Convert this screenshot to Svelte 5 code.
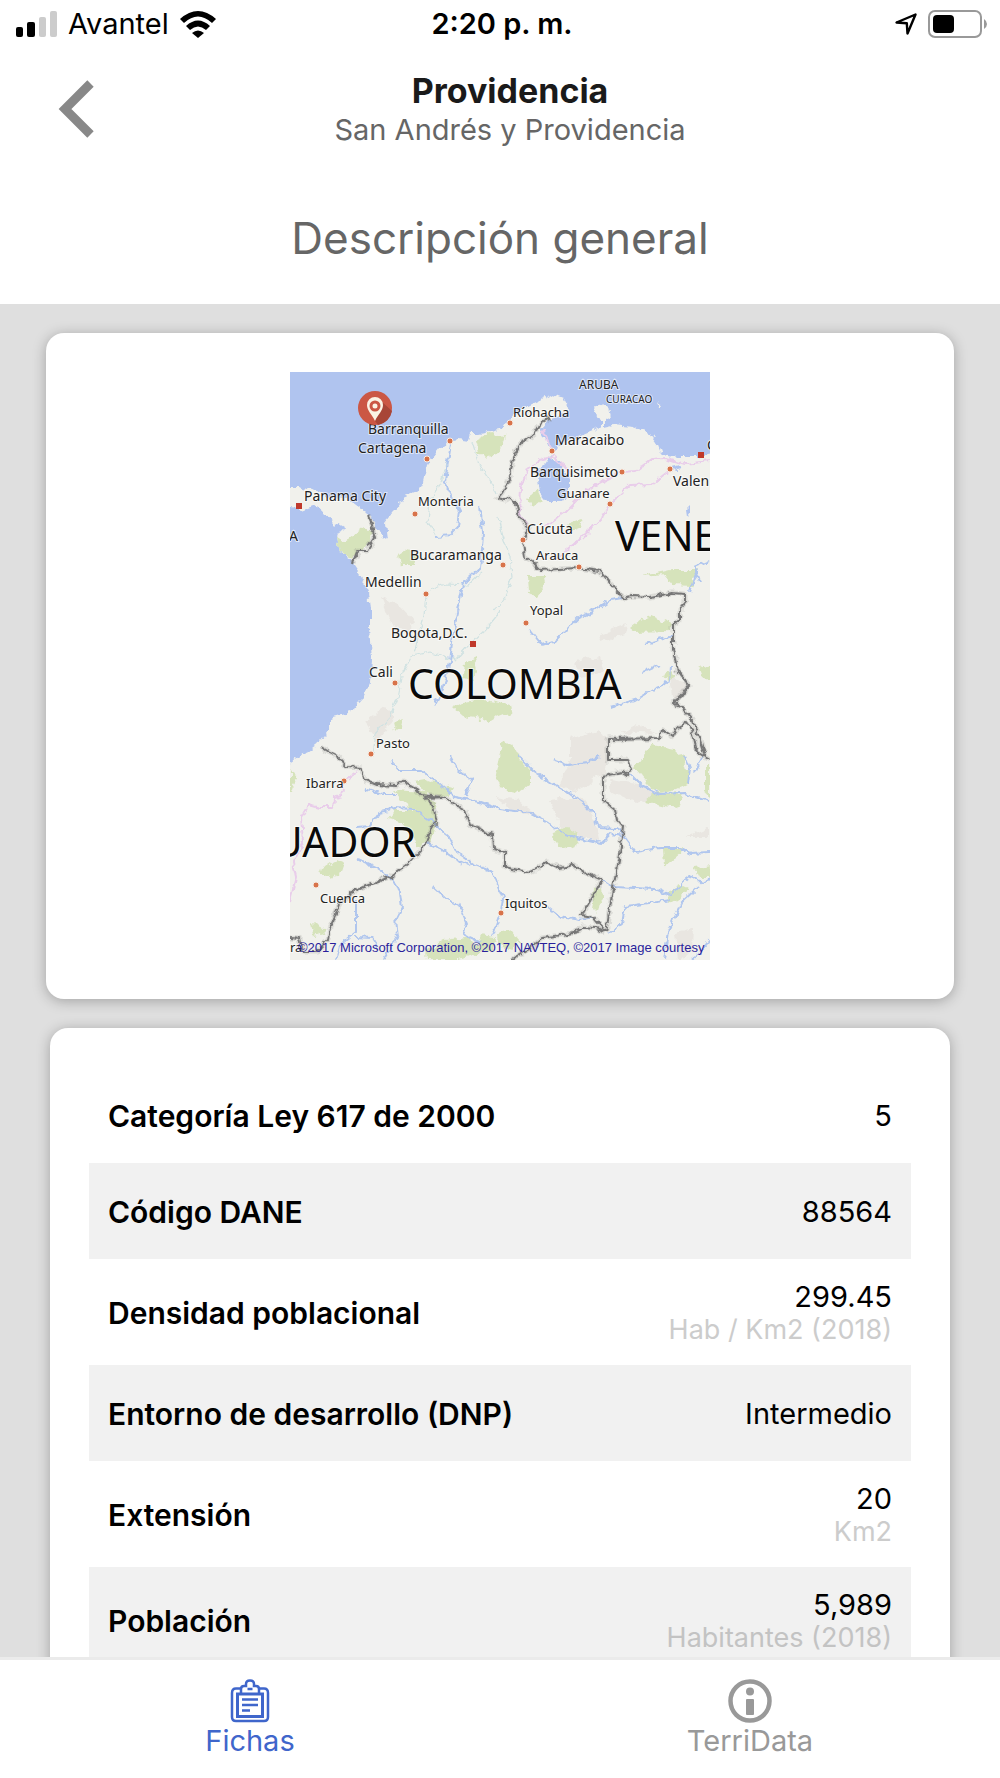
<script lang="ts">
  type Row = { label: string; value: string; unit?: string };
  type Place = { name: string; x: number; y: number; size?: number };

  const rows: Row[] = [
    { label: "Categoría Ley 617 de 2000", value: "5" },
    { label: "Código DANE", value: "88564" },
    { label: "Densidad poblacional", value: "299.45", unit: "Hab / Km2 (2018)" },
    { label: "Entorno de desarrollo (DNP)", value: "Intermedio" },
    { label: "Extensión", value: "20", unit: "Km2" },
    { label: "Población", value: "5,989", unit: "Habitantes (2018)" },
  ];

  const places: Place[] = [
    { name: "ARUBA", x: 289, y: 17, size: 12 },
    { name: "CURACAO", x: 316, y: 31, size: 10 },
    { name: "Ríohacha", x: 223, y: 45, size: 13 },
    { name: "Maracaibo", x: 265, y: 73 },
    { name: "Barquisimeto", x: 240, y: 105 },
    { name: "Guanare", x: 267, y: 126, size: 13 },
    { name: "Valen", x: 383, y: 114 },
    { name: "C", x: 417, y: 78 },
    { name: "Cúcuta", x: 237, y: 162 },
    { name: "Arauca", x: 246, y: 188, size: 13 },
    { name: "Barranquilla", x: 78, y: 62 },
    { name: "Cartagena", x: 68, y: 81 },
    { name: "Panama City", x: 14, y: 129 },
    { name: "Monteria", x: 128, y: 134, size: 13 },
    { name: "Bucaramanga", x: 120, y: 188 },
    { name: "Medellin", x: 75, y: 215 },
    { name: "Bogota,D.C.", x: 101, y: 266 },
    { name: "Cali", x: 79, y: 305 },
    { name: "Pasto", x: 86, y: 376, size: 13 },
    { name: "Yopal", x: 240, y: 243, size: 13 },
    { name: "Ibarra", x: 16, y: 416, size: 13 },
    { name: "Cuenca", x: 30, y: 531, size: 13 },
    { name: "Iquitos", x: 215, y: 536, size: 13 },
  ];

  const cities = [
    [160, 69], [137, 87], [125, 142], [220, 51], [262, 79], [332, 100], [320, 132],
    [380, 97], [233, 168], [213, 193], [289, 195], [136, 222], [105, 311], [81, 382],
    [236, 251], [54, 409], [26, 513], [211, 541],
  ];

  const capitals = [[9, 134], [183, 272], [411, 83]];

  const borders = [
    "M260 46L250 51L243 63L232 70L223 86L220 106L212 121L208 126L215 128L220 125L227 133L230 145L238 156L233 168L235 185L243 190L250 198L287 196L310 199L333 226L343 224L360 225L382 221L395 222L395 230L390 236L390 248L383 253L383 278L388 300L399 313L392 323L383 331L390 334L403 348L410 368L415 385L420 388",
    "M415 385L407 380L402 358L397 351L387 356L382 365L372 358L370 366L318 367L318 388L337 388L341 396L338 403L333 400L323 402L313 404L313 428L325 438L327 448L333 455L330 483L323 516L316 560",
    "M316 560L303 545L292 543L312 508L290 498L283 493L270 496L257 491L240 500L227 498L215 495L215 480L203 477L202 463L180 453L175 438L153 425L130 423L123 415L113 409L107 414L87 413L75 408L70 396L57 395L48 385L40 381L30 375",
    "M153 425L135 426L143 433L147 451L142 455L137 471L120 490L100 505L60 520L58 526L50 531L40 556L38 568L27 580L13 580L10 566L0 565",
    "M316 560L305 556L293 555L283 561L253 566L240 576L222 587",
    "M78 144L82 153L85 166L77 178L68 178L63 191",
  ];

  const rivers = [
    "M161 72L158 90L155 110L164 128L170 140L168 155L160 163L146 165",
    "M190 134L193 160L192 178L190 196L173 212L168 240L163 262L160 290L152 318L144 334",
    "M409 210L404 195L420 188M408 198L400 220",
    "M240 258L252 273L267 268L288 246L302 240L320 228L333 226",
    "M355 272L372 267L383 264M353 300L369 293",
    "M320 335L345 328L362 318L380 310L381 294",
    "M100 389L108 398L130 398L150 412L165 425L190 430L210 437L240 441L258 450L274 462L290 466L312 471L320 462L333 464L345 480L370 476L390 476L400 481L420 480",
    "M160 383L168 398L182 408L176 424",
    "M75 416L92 422L107 422M67 455L80 454L90 440L105 436L124 437L140 448L160 466L167 480L185 493L203 500L213 526L210 545L203 564",
    "M137 471L152 478L165 487L180 494",
    "M68 487L85 495L100 505L110 520L112 536L106 548L108 564L94 588",
    "M143 515L155 526L170 534L177 552L173 563L190 570M66 528L66 560L50 573L46 588M66 565L82 566L88 576",
    "M228 383L245 400L262 411L278 420L293 431L306 445L308 455L325 456L333 462",
    "M263 388L278 393L297 390L310 385",
    "M340 402L352 414L370 422L395 421L405 425L420 430",
    "M395 383L400 396L398 412M413 383L405 399",
    "M312 508L323 515L345 516L365 517L380 523L395 508L402 503L412 511L420 506",
    "M380 528L345 533L335 534L332 552L318 562",
    "M408 515L392 530L385 545L378 560L374 588M420 568L408 582L400 588",
    "M258 536L270 545L290 548L302 545",
  ];

  const streams = [
    "M182 70L188 90L200 108L206 122M158 90L150 112L140 128L138 150L146 165",
    "M210 240L195 258L180 272L165 288L140 280L122 284L113 300L108 325L100 345L85 362L82 382",
    "M140 218L155 212L178 213L192 200M136 222L134 245L124 280",
    "M208 145L213 165L220 185L222 205L215 225L205 238",
  ];

  const roads = [
    "M238 156L230 140L231 115L238 97L250 88L263 84L275 95L282 103M262 78L252 58",
    "M252 156L275 140L293 122L305 113L332 100L345 99L362 87L375 86L395 92L420 89",
    "M265 188L285 172L310 148L320 132L340 113L362 112L380 98",
    "M67 400L54 409L52 424L44 426L43 435L30 435L19 432L11 445L13 470L3 490L6 505L0 530",
  ];

  const parks = [
    "M185 68L200 60L216 65L210 80L196 85L188 80Z",
    "M47 165L55 170L75 155L82 160L80 172L68 180L62 188L50 180Z",
    "M237 204L254 204L255 214L246 225L238 220Z",
    "M350 204L372 200L380 198L407 198L403 214L383 213L375 203L350 205Z",
    "M340 256L350 248L362 244L381 252L380 259L345 260Z",
    "M420 291L409 297L412 305L420 309Z",
    "M163 335L172 330L195 327L222 333L223 340L205 347L197 352L185 345L172 343Z",
    "M213 369L222 373L230 388L240 398L240 412L229 420L210 416L205 402L208 390Z",
    "M345 396L352 385L362 373L385 377L395 385L398 400L398 412L385 418L372 422L362 416Z",
    "M355 429L363 422L393 421L388 437Z",
    "M124 409L135 407L152 413L165 417L160 424L145 425L133 420Z",
    "M104 419L135 421L145 432L147 450L140 470L127 475L123 462L110 450L98 447L105 438L125 438L112 428Z",
    "M263 460L277 455L288 462L286 474L277 478L264 470Z",
    "M28 500L40 492L50 487L55 489L50 503L40 506Z",
    "M373 475L392 476L391 482L374 495Z",
    "M405 496L420 494L420 506L410 506Z",
    "M380 519L390 513L400 518L388 527L381 531Z",
    "M135 580L155 568L175 565L188 572L190 564L205 566L200 578L170 588L136 588Z",
    "M207 562L220 558L230 570L218 578L208 573Z",
    "M304 518L311 516L313 530L306 541L302 537Z",
    "M108 183L118 176L127 186L124 192L110 192Z",
    "M103 351L113 345L111 354L105 360Z",
    "M236 126L248 118L252 127L243 135Z",
    "M277 152L292 146L290 156L280 160Z",
    "M22 550L33 556L34 562L25 565Z",
    "M0 396L6 405L2 418L0 418Z",
    "M373 303L380 300L385 305L378 309Z",
    "M175 290L185 285L188 300L182 310L174 305Z",
    "M415 394L420 394L420 424L415 420Z",
  ];

  const hills = [
    "M280 366L310 358L318 368L316 400L285 420L270 412L280 388Z",
    "M260 428L290 425L305 445L310 468L290 465L270 455Z",
    "M205 425L225 428L250 445L225 440Z",
    "M285 290L310 285L315 300L290 305Z",
    "M396 465L420 455L420 465Z",
    "M320 408L350 412L375 425L345 430L322 420Z",
    "M380 305L398 312L392 325L383 325Z",
    "M330 360L350 352L368 362Z",
    "M385 560L403 556L402 580L388 588Z",
    "M90 225L108 232L125 250L118 262L100 250Z",
    "M75 350L95 335L105 345L88 368Z",
    "M310 262L338 252L335 262L312 270Z",
  ];
</script>

<svelte:head>
  <title>Providencia</title>
</svelte:head>

<div class="app">
  <div class="status">
    <div class="status-left">
      <svg class="signal" viewBox="0 0 41 26" aria-hidden="true">
        <rect x="0" y="16" width="7" height="10" rx="2" />
        <rect x="11" y="11" width="8" height="15" rx="2" />
        <rect class="off" x="23" y="6" width="7" height="20" rx="2" />
        <rect class="off" x="34" y="0" width="7" height="26" rx="2" />
      </svg>
      <span>Avantel</span>
      <svg class="wifi" viewBox="0 0 36 27" aria-hidden="true">
        <path d="M0 8Q18-8 36 8L32 12Q18-1 4 12Z" />
        <path d="M6 15Q18 4 30 15L26 19Q18 12 10 19Z" />
        <path d="M12 22Q18 17 24 22L18 27Z" />
      </svg>
    </div>
    <span class="time">2:20 p. m.</span>
    <div class="status-right">
      <svg class="location" viewBox="0 0 22 22" aria-hidden="true">
        <path d="M1.5 9.5L20.5 1.5L12.5 20.5L11.8 10.2Z" />
      </svg>
      <svg class="battery" viewBox="0 0 60 28" aria-hidden="true">
        <rect class="shell" x="1" y="1" width="52" height="26" rx="6" />
        <rect x="5" y="5" width="21" height="18" rx="4" />
        <path class="nub" d="M56 9Q59 11 59 14Q59 17 56 19Z" />
      </svg>
    </div>
  </div>

  <header>
    <button class="back" aria-label="Volver">
      <svg viewBox="0 0 36 58" aria-hidden="true">
        <path d="M32.5 3.5L7 29L32.5 54.5" />
      </svg>
    </button>
    <div class="place">
      <strong>Providencia</strong>
      <span>San Andrés y Providencia</span>
    </div>
  </header>

  <h1>Descripción general</h1>

  <main>
    <section class="card map-card">
      <svg class="map" viewBox="0 0 420 588" role="img" aria-label="Mapa de Colombia">
        <defs>
          <filter id="rough" x="-5%" y="-5%" width="110%" height="110%">
            <feTurbulence type="fractalNoise" baseFrequency="0.12" numOctaves="3" seed="4" />
            <feDisplacementMap in="SourceGraphic" scale="9" xChannelSelector="R" yChannelSelector="G" />
          </filter>
          <filter id="rough-line" x="-5%" y="-5%" width="110%" height="110%">
            <feTurbulence type="fractalNoise" baseFrequency="0.15" numOctaves="2" seed="9" />
            <feDisplacementMap in="SourceGraphic" scale="7" xChannelSelector="R" yChannelSelector="G" />
          </filter>
        </defs>
        <rect class="sea" width="420" height="588" />
        <g filter="url(#rough)">
          <path
            class="land"
            d="M-9 115L10 115L27 120L40 125L57 126L70 136L80 143L87 156L93 168L98 166L96 150L107 136L113 126L127 120L133 110L137 93L142 86L150 76L158 70L167 68L180 70L182 61L190 61L213 56L223 43L240 33L257 25L263 22L273 26L278 35L272 43L257 48L250 56L257 70L262 80L273 71L293 63L310 56L323 53L343 55L360 61L367 70L372 83L387 85L407 85L430 80L430 600L-9 600L-9 396L0 391L10 385L30 370L40 358L40 346L62 340L72 328L80 311L82 288L80 255L80 238L78 218L72 205L62 190L50 180L47 165L53 156L45 151L33 140L23 133L10 138L-9 136Z"
          />
          <path class="land" d="M305 38L312 30L318 36L320 46L315 48L315 56L312 56L312 48L306 45Z" />
          <path class="land" d="M367 30L371 36L369 38Z" />
          <path class="sea" d="M263 82L255 92L247 100L250 120L258 130L272 130L280 120L280 106L272 96Z" />
          <path class="sea" d="M396 137L400 133L400 140L397 144ZM382 95L390 93L392 97L385 98Z" />
          {#each hills as d}
            <path class="hill" {d} />
          {/each}
          {#each parks as d}
            <path class="park" {d} />
          {/each}
        </g>
        <g filter="url(#rough-line)">
          {#each streams as d}
            <path class="stream" {d} />
          {/each}
          {#each rivers as d}
            <path class="river" {d} />
          {/each}
          {#each roads as d}
            <path class="road" {d} />
          {/each}
          {#each borders as d}
            <path class="border-glow" {d} />
            <path class="border" {d} />
          {/each}
        </g>
        {#each cities as [cx, cy]}
          <circle class="city" {cx} {cy} r="3" />
        {/each}
        {#each capitals as [x, y]}
          <rect class="capital" x={x - 3} y={y - 3} width="6" height="6" />
        {/each}
        {#each places as place}
          <text class="town" x={place.x} y={place.y} font-size={place.size ?? 14}>{place.name}</text>
        {/each}
        <text class="town" x="-1" y="169" font-size="14">A</text>
        <text class="country" x="325" y="179">VENE</text>
        <text class="country" x="118" y="327">COLOMBIA</text>
        <text class="country" x="126" y="485" text-anchor="end">UADOR</text>
        <text class="town" x="0" y="580" font-size="13">ra</text>
        <text class="credit" x="8" y="580">©2017 Microsoft Corporation, ©2017 NAVTEQ, ©2017 Image courtesy</text>
        <g class="pin">
          <circle cx="85" cy="36" r="17" />
          <path class="pin-shade" d="M91 29L102 39A17 17 0 0 1 88 53L85 49Z" />
          <path class="pin-mark" d="M85 49C82 42 77 39 77 33A8 8 0 0 1 93 33C93 39 88 42 85 49Z" />
          <circle class="pin-ring" cx="85" cy="34" r="4" />
        </g>
      </svg>
    </section>

    <section class="card data-card">
      <table>
        <tbody>
          {#each rows as row}
            <tr>
              <th scope="row">{row.label}</th>
              <td>
                {row.value}
                {#if row.unit}
                  <span class="unit">{row.unit}</span>
                {/if}
              </td>
            </tr>
          {/each}
        </tbody>
      </table>
    </section>
  </main>

  <nav>
    <a class="tab active" href="#fichas" aria-current="page">
      <svg viewBox="0 0 44 44" aria-hidden="true">
        <g fill="none" stroke="currentColor" stroke-width="2.5">
          <path d="M13 9.5H8Q4 9.5 4 14V38Q4 42 8 42H36Q40 42 40 38V14Q40 9.5 36 9.5H31" />
          <path d="M13 14V10Q13 7 16 7H18V5Q18 1.500 22 1.500Q26 1.500 26 5V7H28Q31 7 31 10V14" />
          <path d="M9.5 15H34.5V37.5H9.5Z" stroke-width="3" />
          <path d="M14 20.500H30M14 26H30M14 31.500H22M19.500 10H24.500" />
        </g>
      </svg>
      <span>Fichas</span>
    </a>
    <a class="tab" href="#terridata">
      <svg viewBox="0 0 44 44" aria-hidden="true">
        <circle cx="22" cy="22" r="19.5" fill="none" stroke="currentColor" stroke-width="4.5" />
        <circle cx="22" cy="12.5" r="4" fill="currentColor" />
        <rect x="18" y="20" width="8" height="16" rx="1" fill="currentColor" />
      </svg>
      <span>TerriData</span>
    </a>
  </nav>
</div>

<style>
  :global(body) {
    background: #fff;
  }

  .app {
    display: flex;
    flex-direction: column;
    height: 100vh;
    font-family: Inter, sans-serif;
    font-size: 29px;
    line-height: 32px;
    color: #000;
  }

  .status {
    display: grid;
    grid-template-columns: 1fr auto 1fr;
    align-items: center;
    height: 48px;
    padding: 0 12px 0 16px;
  }

  .status-left,
  .status-right {
    display: flex;
    align-items: center;
    gap: 11px;
  }

  .status-right {
    justify-content: flex-end;
  }

  .signal {
    width: 41px;
    height: 26px;
  }

  .signal .off {
    fill: #ccc;
  }

  .wifi {
    width: 36px;
    height: 27px;
  }

  .time {
    font-weight: 600;
  }

  .location {
    width: 22px;
    height: 22px;
    fill: none;
    stroke: #000;
    stroke-width: 2.4;
    stroke-linejoin: round;
  }

  .battery {
    width: 60px;
    height: 28px;
  }

  .battery .shell {
    fill: none;
    stroke: #999;
    stroke-width: 2;
  }

  .battery .nub {
    fill: #999;
  }

  header {
    display: grid;
    grid-template-columns: 48px 1fr 28px;
    align-items: center;
    padding: 24px 52px 0;
  }

  .back {
    display: flex;
    padding: 0 6px;
    border: 0;
    background: none;
    cursor: pointer;
  }

  .back svg {
    width: 36px;
    height: 58px;
    fill: none;
    stroke: #888;
    stroke-width: 9;
  }

  .place {
    display: flex;
    flex-direction: column;
    align-items: center;
    gap: 4px;
    color: #666;
  }

  .place strong {
    font-size: 34px;
    line-height: 38px;
    color: #1a1a1a;
  }

  h1 {
    margin: 0;
    padding: 62px 0 36px;
    font-size: 44px;
    line-height: 60px;
    font-weight: 400;
    text-align: center;
    color: #666;
  }

  main {
    flex: 1;
    min-height: 0;
    overflow-y: auto;
    scrollbar-width: none;
    padding: 29px 46px;
    background: #dfdfdf;
  }

  .card {
    border-radius: 18px;
    background: #fff;
    box-shadow: 0 2px 14px rgba(0, 0, 0, 0.28);
  }

  .map-card {
    display: flex;
    justify-content: center;
    padding: 39px;
  }

  .map {
    width: 420px;
    height: 588px;
    overflow: hidden;
  }

  .sea {
    fill: #b0c4ef;
  }

  .land {
    fill: #f1f1ec;
  }

  .hill {
    fill: #e9e6e1;
  }

  .park {
    fill: #d6e3bb;
  }

  .river,
  .stream,
  .road,
  .border,
  .border-glow {
    fill: none;
    stroke-linejoin: round;
  }

  .river {
    stroke: #b0c6ee;
    stroke-width: 2;
  }

  .stream {
    stroke: #d0e2e2;
    stroke-width: 1.2;
  }

  .road {
    stroke: #e9cdea;
    stroke-width: 2;
  }

  .border {
    stroke: #777;
    stroke-width: 2;
  }

  .border-glow {
    stroke: rgba(120, 120, 120, 0.18);
    stroke-width: 5;
  }

  .city {
    fill: #d8734a;
    stroke: #f6ece4;
  }

  .capital {
    fill: #c0392b;
  }

  .town,
  .country {
    font-family: "Noto Sans", sans-serif;
    fill: #222;
    stroke: rgba(255, 255, 255, 0.6);
    stroke-width: 2;
    paint-order: stroke;
  }

  .country {
    font-size: 41px;
    fill: #0a0a0a;
  }

  .credit {
    font-family: "Liberation Sans", sans-serif;
    font-size: 13px;
    fill: #2a1f9c;
  }

  .pin {
    fill: #cb5744;
  }

  .pin-shade {
    fill: #a84637;
  }

  .pin-mark {
    fill: #fbf3e4;
  }

  .pin-ring {
    fill: #fbf3e4;
    stroke: #cb5744;
    stroke-width: 3;
  }

  .data-card {
    margin: 29px 4px 0;
    padding: 39px;
  }

  table {
    width: 100%;
    border-collapse: collapse;
  }

  tr:nth-child(even) {
    background: #f1f1f1;
  }

  th,
  td {
    height: 32px;
    padding: 33px 19px 31px;
  }

  th {
    font-size: 30px;
    font-weight: 600;
    text-align: left;
  }

  td {
    text-align: right;
  }

  td:has(.unit) {
    padding: 22px 19px 18px;
  }

  .unit {
    display: block;
    font-size: 27px;
    line-height: 34px;
    color: #ccc;
  }

  tr:nth-child(even) .unit {
    color: #c3c3c3;
  }

  nav {
    display: flex;
    height: 118px;
    border-top: 3px solid #ebebeb;
    background: #fff;
  }

  .tab {
    flex: 1;
    display: flex;
    flex-direction: column;
    align-items: center;
    gap: 2px;
    padding-top: 19px;
    color: #999;
    text-decoration: none;
  }

  .tab svg {
    width: 44px;
    height: 44px;
  }

  .tab.active {
    color: #3f66cb;
  }
</style>
